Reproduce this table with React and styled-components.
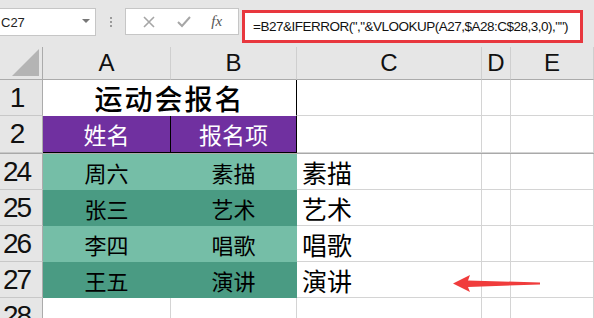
import React from 'react'
import styled, { createGlobalStyle } from 'styled-components'

const GlobalStyle = createGlobalStyle`
    html, body {
        margin: 0;
        padding: 0;
        background: #ffffff;
        overflow: hidden;
    }
    body {
        font-family: "Liberation Sans", "Noto Sans CJK SC", sans-serif;
    }
`

const Window = styled.div`
    width: 594px;
    height: 318px;
    overflow: hidden;
    position: relative;
    background: #ffffff;
`

const Toolbar = styled.div`
    height: 47px;
    background: #e6e6e6;
    display: flex;
    align-items: flex-start;
    padding-top: 8px;
    box-sizing: border-box;
`

const NameBox = styled.div`
    width: 96px;
    height: 28px;
    box-sizing: border-box;
    background: #fff;
    border: 1px solid #c6c6c6;
    border-left: none;
    display: flex;
    align-items: center;
    justify-content: space-between;
    padding: 0 5px 0 1px;
    font-size: 13px;
    color: #222;
`

const DropArrow = styled.span`
    width: 0;
    height: 0;
    border-left: 4px solid transparent;
    border-right: 4px solid transparent;
    border-top: 4px solid #777;
    margin-top: -2px;
`

const Grip = styled.div`
    width: 29px;
    height: 28px;
    display: flex;
    flex-direction: column;
    align-items: center;
    justify-content: center;
    gap: 2px;

    span{
        width: 2px;
        height: 2px;
        background: #9a9a9a;
    }
`

const ButtonBox = styled.div`
    width: 114px;
    height: 27px;
    box-sizing: border-box;
    background: #fff;
    border: 1px solid #c6c6c6;
    display: flex;
    align-items: center;
    justify-content: space-around;
    padding: 0 6px;
`

const Fx = styled.span`
    font-family: "Liberation Serif", serif;
    font-style: italic;
    font-size: 15px;
    color: #555;
`

const FormulaBar = styled.div`
    margin-left: 3px;
    margin-top: 2px;
    width: 341px;
    height: 33px;
    box-sizing: border-box;
    background: #fff;
    border: 3px solid #e8373e;
    display: flex;
    align-items: center;
    padding-left: 8px;
    font-size: 13.5px;
    letter-spacing: -0.5px;
    color: #111;
    white-space: nowrap;
`

const Sheet = styled.div`
    display: grid;
    grid-template-columns: 43px 128px 126px 185px 29px 1fr;
    grid-template-rows: 33px 36px 37px 1px 36px 36px 36px 36px 36px;
`

const Corner = styled.div`
    background: #e6e6e6;
    border-right: 1px solid #ababab;
    border-bottom: 1px solid #ababab;
    box-sizing: border-box;
`

const ColHead = styled.div`
    background: #e6e6e6;
    border-right: 1px solid #cfcfcf;
    border-bottom: 1px solid #ababab;
    box-sizing: border-box;
    display: flex;
    align-items: center;
    justify-content: center;
    font-size: 24px;
    color: #111;
`

const RowHead = styled.div`
    background: #e6e6e6;
    border-right: 1px solid #ababab;
    border-bottom: 1px solid #c8c8c8;
    box-sizing: border-box;
    display: flex;
    align-items: center;
    justify-content: center;
    padding-right: 9px;
    font-size: 28px;
    letter-spacing: -2px;
    color: #111;
`

const Cell = styled.div`
    grid-column: span ${p => p.$span || 1};
    background: ${p => p.$bg || '#fff'};
    border-right: 1px solid ${p => p.$edge || '#d4d4d4'};
    border-bottom: 1px solid ${p => p.$base || '#d4d4d4'};
    box-sizing: border-box;
    display: flex;
    align-items: center;
    justify-content: ${p => p.$left ? 'flex-start' : 'center'};
    padding-left: ${p => p.$left ? '5px' : '0'};
    font-family: "Noto Sans CJK SC", sans-serif;
    font-size: ${p => p.$size || 22}px;
    font-weight: ${p => p.$weight || 400};
    letter-spacing: ${p => p.$spread || 0}px;
    color: ${p => p.$color || '#000'};
    white-space: nowrap;
`

const HiddenRows = styled.div`
    grid-column: 1 / -1;
    background: #a9a9a9;
`

const Pointer = styled.svg`
    position: absolute;
    left: 450px;
    top: 274px;
`

const PURPLE = '#7030a0'
const TEAL_LIGHT = '#75bea7'
const TEAL_DARK = '#4a9b83'

const entries = [
    { row: 24, name: '周六', item: '素描', joined: '素描', bg: TEAL_LIGHT },
    { row: 25, name: '张三', item: '艺术', joined: '艺术', bg: TEAL_DARK },
    { row: 26, name: '李四', item: '唱歌', joined: '唱歌', bg: TEAL_LIGHT },
    { row: 27, name: '王五', item: '演讲', joined: '演讲', bg: TEAL_DARK },
]

function Blank() {
    return (<>
        <Cell />
        <Cell />
        <Cell />
    </>)
}

export default function App() {
    return (
        <Window>
            <GlobalStyle />
            <Toolbar>
                <NameBox>C27<DropArrow /></NameBox>
                <Grip><span /><span /><span /></Grip>
                <ButtonBox>
                    <svg width="14" height="14" viewBox="0 0 14 14">
                        <path d="M2 2 L12 12 M12 2 L2 12" stroke="#a6a6a6" strokeWidth="1.6" fill="none" />
                    </svg>
                    <svg width="16" height="14" viewBox="0 0 16 14">
                        <path d="M2 7 L6 11 L14 2" stroke="#a6a6a6" strokeWidth="2" fill="none" />
                    </svg>
                    <Fx>fx</Fx>
                </ButtonBox>
                <FormulaBar>=B27&amp;IFERROR(","&amp;VLOOKUP(A27,$A28:C$28,3,0),"")</FormulaBar>
            </Toolbar>

            <Sheet>
                <Corner>
                    <svg width="43" height="33" viewBox="0 0 43 33" style={{ display: 'block' }}>
                        <polygon points="39,2 39,29 12,29" fill="#b4b4b4" />
                    </svg>
                </Corner>
                <ColHead>A</ColHead>
                <ColHead>B</ColHead>
                <ColHead>C</ColHead>
                <ColHead>D</ColHead>
                <ColHead>E</ColHead>

                <RowHead>1</RowHead>
                <Cell $span={2} $size={28} $weight={500} $spread={2} $edge="#000" $base="#fff">运动会报名</Cell>
                <Blank />

                <RowHead>2</RowHead>
                <Cell $bg={PURPLE} $color="#fff" $size={23} $edge="#000" $base="#000">姓名</Cell>
                <Cell $bg={PURPLE} $color="#fff" $size={23} $edge="#000" $base="#000">报名项</Cell>
                <Blank />

                <HiddenRows />

                {entries.map(e => (
                    <React.Fragment key={e.row}>
                        <RowHead>{e.row}</RowHead>
                        <Cell $bg={e.bg} $edge={e.bg} $base={e.bg}>{e.name}</Cell>
                        <Cell $bg={e.bg} $edge={e.bg} $base={e.bg}>{e.item}</Cell>
                        <Cell $left $size={25}>{e.joined}</Cell>
                        <Cell />
                        <Cell />
                    </React.Fragment>
                ))}

                <RowHead>28</RowHead>
                <Cell />
                <Cell />
                <Blank />
            </Sheet>

            <Pointer width="95" height="20" viewBox="0 0 95 20">
                <polygon points="3,9.5 20,1 18,6.5 90,8.5 90,10.5 18,13 20,18" fill="#f03c3c" />
            </Pointer>
        </Window>
    )
}
